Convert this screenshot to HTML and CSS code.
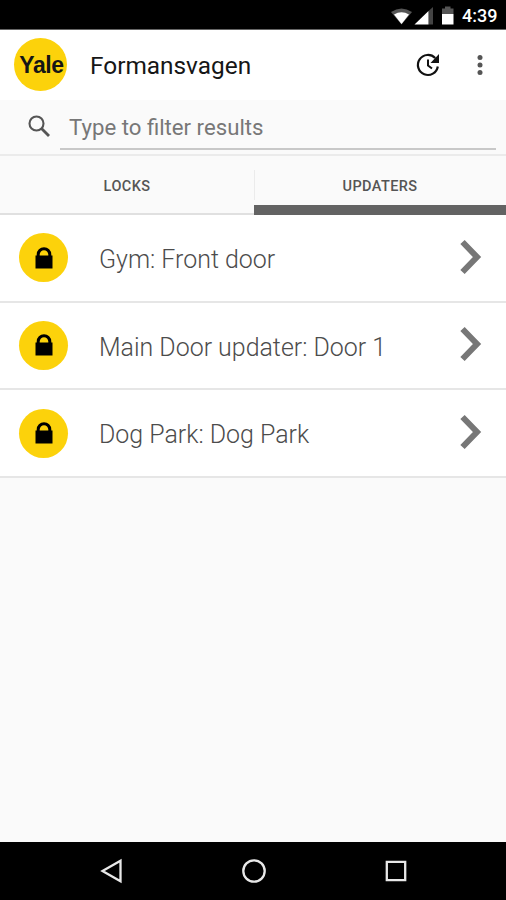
FILE: index.html
```html
<!DOCTYPE html>
<html lang="en">
<head>
<meta charset="utf-8">
<title>Formansvagen</title>
<link rel="stylesheet" href="styles.css">
</head>
<body>
<div class="status">
  <svg class="status-icons" width="66" height="20" viewBox="390 6 66 20">
    <path fill="#555" d="M391 12Q401.500 5 412 12L401.500 24.500Z"/>
    <path fill="#fff" d="M394 14.500Q401.500 10 409 14.500L401.500 24Z"/>
    <path fill="#444" d="M428.500 11L433 7V24.500H428.500Z"/>
    <path fill="#fff" d="M414.500 24.500L428.500 11V24.500Z"/>
    <path fill="#555" d="M442 14V8.500H445V6.500H450.500V8.500H453.500V14Z"/>
    <path fill="#fff" d="M442 14H453.500V24.500H442Z"/>
  </svg>
  <span class="clock">4:39</span>
</div>
<header class="header">
  <div class="logo"><span>Yale</span></div>
  <h1 class="title">Formansvagen</h1>
  <svg class="refresh" width="26" height="26" viewBox="415 52 26 26" fill="none" stroke="#111" stroke-width="2.200">
    <path d="M435.200 58.100A10 10 0 1 0 437.800 66.500"/>
    <path fill="#111" stroke="none" d="M439 54V63H430.500Z"/>
    <path stroke-width="2" d="M428 59.500V65.500L432 68.500"/>
  </svg>
  <svg class="more" width="8" height="22" viewBox="0 0 8 22" fill="#555"><circle cx="4" cy="3.500" r="2.500"/><circle cx="4" cy="11" r="2.500"/><circle cx="4" cy="18.500" r="2.500"/></svg>
</header>
<div class="search">
  <svg class="search-icon" width="24" height="24" viewBox="27 114 24 24" fill="none" stroke="#555"><circle cx="36.500" cy="123.500" r="7" stroke-width="2.100"/><path stroke-width="2.800" d="M41.500 128.500L49 136"/></svg>
  <div class="field">Type to filter results</div>
</div>
<nav class="tabs">
  <div class="tab">LOCKS</div>
  <div class="tab active">UPDATERS</div>
</nav>
<main class="list">
  <div class="row">
    <div class="badge"><svg width="18" height="22" viewBox="0 0 18 22"><path d="M0.500 8.500H17.500V21.500H0.500Z"/><path d="M3.200 9V7.500A5.800 5.800 0 0 1 14.800 7.500V9" fill="none" stroke="#000" stroke-width="3"/></svg></div>
    <span class="name">Gym: Front door</span>
    <svg class="chevron" width="24" height="36" viewBox="0 0 24 36"><path d="M2.500 3L17 18L2.500 33" fill="none" stroke="#777" stroke-width="6"/></svg>
  </div>
  <div class="row">
    <div class="badge"><svg width="18" height="22" viewBox="0 0 18 22"><path d="M0.500 8.500H17.500V21.500H0.500Z"/><path d="M3.200 9V7.500A5.800 5.800 0 0 1 14.800 7.500V9" fill="none" stroke="#000" stroke-width="3"/></svg></div>
    <span class="name">Main Door updater: Door 1</span>
    <svg class="chevron" width="24" height="36" viewBox="0 0 24 36"><path d="M2.500 3L17 18L2.500 33" fill="none" stroke="#777" stroke-width="6"/></svg>
  </div>
  <div class="row">
    <div class="badge"><svg width="18" height="22" viewBox="0 0 18 22"><path d="M0.500 8.500H17.500V21.500H0.500Z"/><path d="M3.200 9V7.500A5.800 5.800 0 0 1 14.800 7.500V9" fill="none" stroke="#000" stroke-width="3"/></svg></div>
    <span class="name">Dog Park: Dog Park</span>
    <svg class="chevron" width="24" height="36" viewBox="0 0 24 36"><path d="M2.500 3L17 18L2.500 33" fill="none" stroke="#777" stroke-width="6"/></svg>
  </div>
</main>
<footer class="navbar">
  <svg width="26" height="26" viewBox="0 0 26 26"><path d="M3.500 13L21.500 2.800V23.200Z"/></svg>
  <svg width="26" height="26" viewBox="0 0 26 26"><circle cx="13" cy="13" r="10.700"/></svg>
  <svg width="26" height="26" viewBox="0 0 26 26"><path d="M3.800 3.800H22.200V22.200H3.800Z"/></svg>
</footer>
</body>
</html>
```
FILE: styles.css
```css
* { box-sizing: border-box; }
body {
  margin: 0;
  width: 506px;
  height: 900px;
  display: flex;
  flex-direction: column;
  overflow: hidden;
  background: #fafafa;
  font-family: Roboto, "Liberation Sans", sans-serif;
}
svg { display: block; flex: none; }
.status {
  height: 30px;
  background: #000;
  border-bottom: 1px solid #666;
  display: flex;
  align-items: center;
  padding: 2px 0 0 390px;
}
.clock { margin-left: 6px; color: #fff; font-size: 18px; font-weight: 500; line-height: 20px; }
.header {
  height: 70px;
  background: #fff;
  display: flex;
  align-items: center;
  padding: 0 22px 0 14px;
}
.logo {
  width: 53px;
  height: 53px;
  margin-top: -1px;
  padding-left: 2px;
  border-radius: 50%;
  background: #fcd20b;
  display: flex;
  align-items: center;
  justify-content: center;
  font: bold 23px/26px "Liberation Sans", sans-serif;
  letter-spacing: -0.4px;
  color: #151515;
}
.title { margin: 2px 0 0 23px; font-size: 24.4px; font-weight: 400; line-height: 32px; color: #161616; }
.refresh { margin-left: auto; }
.more { margin-left: 35px; }
.search {
  height: 56px;
  border-bottom: 2px solid #ebebeb;
  display: flex;
  align-items: flex-start;
  padding: 0 10px 0 27px;
}
.search-icon { margin-top: 14px; }
.field {
  flex: 1;
  height: 50px;
  margin-left: 9px;
  padding: 12px 0 0 9px;
  border-bottom: 2px solid #c8c8c8;
  color: #777;
  font-size: 22.2px;
  line-height: 30px;
}
.tabs { height: 59px; display: flex; }
.tab {
  width: 254px;
  height: 59px;
  border-bottom: 2px solid #e0e0e0;
  text-align: center;
  font-size: 14.500px;
  letter-spacing: 0.4px;
  font-weight: 500;
  line-height: 61px;
  color: #555;
}
.active {
  width: 252px;
  border-bottom: 10px solid #636363;
  background: linear-gradient(#ebebeb, #ebebeb) 0 14px / 1px 30px no-repeat;
}
.row {
  height: 87.670px;
  background: #fff;
  border-bottom: 2px solid #e6e6e6;
  display: flex;
  align-items: center;
  padding: 0 22px 0 19px;
}
.badge {
  width: 49px;
  height: 49px;
  border-radius: 50%;
  background: #fcd20b;
  display: flex;
  align-items: center;
  justify-content: center;
}
.name { margin: 4.600px 0 0 31px; color: #4c4c4c; font-size: 24.95px; font-weight: 300; line-height: 32px; white-space: nowrap; }
.chevron { margin: -2px 0 0 auto; }
.navbar {
  height: 58px;
  margin-top: auto;
  background: #000;
  display: flex;
  justify-content: space-between;
  align-items: center;
  padding: 0 97px 0 99px;
}
.navbar svg { fill: none; stroke: #e8e8e8; stroke-width: 2.300; }
```
